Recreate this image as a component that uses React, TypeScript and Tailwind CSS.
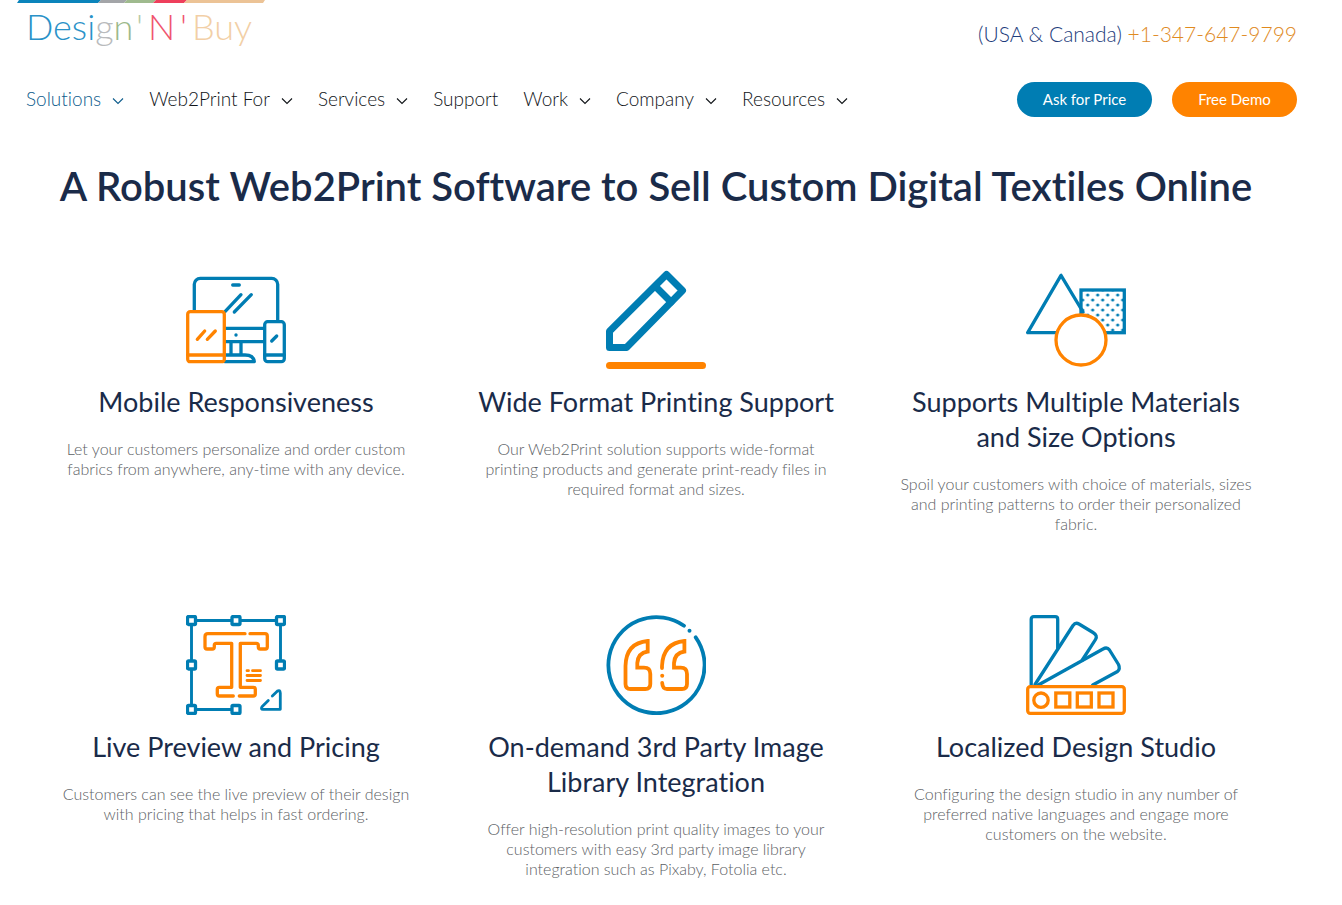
import { Fragment, type ReactNode } from "react";

const BLUE = "#007db3";
const ORANGE = "#ff8300";

function Logo() {
  return (
    <svg width="248" height="52" viewBox="0 0 248 52" role="img" aria-label="Design 'N' Buy">
      <path d="M2 0H84L81 3H0Z" fill="#0a84bb" />
      <path d="M84 0H110L107 3H81Z" fill="#a3a5a8" />
      <path d="M110 0H139L136 3H107Z" fill="#9fba8e" />
      <path d="M139 0H170L167 3H136Z" fill="#ee3f5c" />
      <path d="M170 0H248L246 3H167Z" fill="#ecc396" />
      <g fontFamily="Lato, sans-serif" fontSize="36" fontWeight="300">
        <text x="9" y="40" fill="#2a92c8">
          Desi<tspan fill="#b9bbbd">g</tspan>
          <tspan fill="#9cb98b">n</tspan>
        </text>
        <text x="119" y="40" fill="#b4caa8">'</text>
        <text x="131" y="40" fill="#f0556f">N</text>
        <text x="163" y="40" fill="#f0556f">'</text>
        <text x="175" y="40" fill="#f2cfa6">Buy</text>
      </g>
    </svg>
  );
}

function Chevron() {
  return (
    <svg width="12" height="8" viewBox="0 0 12 8" fill="none" stroke="currentColor" className="mt-1" aria-hidden="true">
      <path d="M1 1.5L6 6.5L11 1.5" strokeWidth="1.1" />
    </svg>
  );
}

function Icon({ children, width = 3.3 }: { children: ReactNode; width?: number }) {
  return (
    <svg
      width="100"
      height="100"
      viewBox="0 0 100 100"
      fill="none"
      stroke={BLUE}
      strokeWidth={width}
      strokeLinecap="round"
      strokeLinejoin="round"
      aria-hidden="true"
    >
      {children}
    </svg>
  );
}

function DevicesIcon() {
  return (
    <Icon>
      <path d="M8.3 41V14.3a6 6 0 0 1 6-6H85.7a6 6 0 0 1 6 6V51" />
      <path d="M39 58.3H78M39 71.7H78M46.7 15H53.3" />
      <path d="M39 41.7L55 24.7M48.3 42L65.3 24.7" />
      <path d="M45 72V85M55 72V85M39 85H59Q67.5 85 68.3 91.7H39" />
      <circle cx="50" cy="65" r="1.7" fill={BLUE} stroke="none" />
      <rect x="78.7" y="51.7" width="19.6" height="40" rx="3" fill="white" />
      <path d="M78.7 85H98.3M85.7 71L90.7 66" />
      <g stroke={ORANGE}>
        <rect x="1.7" y="41.7" width="36.6" height="50" rx="2.5" fill="white" />
        <path d="M1.7 85H38.3M11.3 69.3L18.7 61M21.3 69.3L29.3 61" />
      </g>
    </Icon>
  );
}

function PencilIcon() {
  return (
    <Icon width={7}>
      <path d="M3.5 77.5V61.3L60.5 4.5L76.5 20.5L20.5 77.5Z" />
      <path d="M49.5 16.5L65 32" />
      <path d="M3.5 95.5H96.5" stroke={ORANGE} />
    </Icon>
  );
}

function ShapesIcon() {
  return (
    <Icon>
      <defs>
        <pattern id="dots" x="56.7" y="20" width="10" height="10" patternUnits="userSpaceOnUse">
          <g fill={BLUE} stroke="none">
            <circle cx="5" cy="5" r="1.6" />
            <circle cx="0" cy="0" r="1.6" />
            <circle cx="10" cy="0" r="1.6" />
            <circle cx="0" cy="10" r="1.6" />
            <circle cx="10" cy="10" r="1.6" />
          </g>
        </pattern>
      </defs>
      <path d="M57 42L35 5.3L1.7 62.7H36" />
      <rect x="55" y="20" width="43.3" height="42.7" fill="url(#dots)" strokeLinejoin="miter" />
      <circle cx="55" cy="70" r="25" fill="white" stroke={ORANGE} />
    </Icon>
  );
}

const handles = [
  [5.5, 5.5],
  [50, 5.5],
  [94.5, 5.5],
  [5.5, 50],
  [94.5, 50],
  [5.5, 94.5],
  [50, 94.5],
];

function TypeIcon() {
  return (
    <Icon>
      <path d="M5.5 94.5V5.5H94.5V50M5.5 94.5H50" strokeWidth="2.9" />
      {handles.map(([x, y]) => (
        <rect key={`${x}-${y}`} x={x - 4} y={y - 4} width="8" height="8" rx="1" fill="white" />
      ))}
      <path d="M82.3 85.5L76 91.8Q74.5 94.3 77 94.3H94.3V78Q94 74.5 91.5 76L86.3 81" strokeWidth="2.8" />
      <g stroke={ORANGE} strokeWidth="3.3">
        <path d="M59 18.7H22Q19 18.7 19 21.7V32Q19 34 21 34H26.3Q28.3 34 28.3 32V30.3Q28.3 28.3 30.3 28.3H45.7V72.3H33.3Q31.3 72.3 31.3 74.3V79Q31.3 81 33.3 81H47.3" />
        <path d="M64 18.7H79Q81.3 18.7 81.3 21V32Q81.3 34 79.3 34H74.3Q72.3 34 72.3 32V30.3Q72.3 28.3 70.3 28.3H54.3V72.3H67.3Q69.3 72.3 69.3 74.3V79Q69.3 81 67.3 81H53.3" />
        <path d="M61 55.7H62.5M66.5 55.7H74.5M61 60.5H74.5M61 65.5H74.5" strokeWidth="2.8" />
      </g>
    </Icon>
  );
}

function QuoteIcon() {
  return (
    <Icon width={3.8}>
      <path d="M78 10.7A48.1 48.1 0 1 0 89.7 22.3" />
      <circle cx="83.5" cy="15.7" r="2" fill={BLUE} stroke="none" />
      <g stroke={ORANGE} strokeLinejoin="miter">
        <path d="M41.7 26V36.5Q32 38 31.3 48V52.7H38Q44.3 52.7 44.3 59V69Q44.3 74 39.3 74H24.5Q19.5 74 19.5 69V51Q20 28 41.7 26Z" />
        <path d="M56 53V51Q57 28 78.4 26V36.5Q68.7 38 68 48V52.7H74.7Q81 52.7 81 59V69Q81 74 76 74H61Q56.5 74 56.2 68" />
      </g>
      <circle cx="56.2" cy="60.7" r="2" fill={ORANGE} stroke="none" />
    </Icon>
  );
}

function SwatchIcon() {
  return (
    <Icon>
      <path d="M5.2 70V4.2Q5.2 1.7 7.7 1.7H29.2Q31.7 1.7 31.7 4.2V33" />
      <path d="M9 69.5L47 10.5Q49.5 7 53 9L67 17.5Q72 20.5 69.5 24.5L56.3 45" />
      <path d="M12.3 70L77 34Q81 31.5 83.5 35L92.5 49.5Q94.5 54 91.5 56.5L66.7 70" />
      <g stroke={ORANGE}>
        <rect x="1.7" y="71.7" width="96.6" height="26.6" rx="2.5" fill="white" />
        <circle cx="15" cy="85.2" r="7.2" />
        <g strokeLinejoin="miter">
          <rect x="29.8" y="78" width="14" height="14" />
          <rect x="51.3" y="78" width="14" height="14" />
          <rect x="73" y="78" width="14" height="14" />
        </g>
      </g>
    </Icon>
  );
}

const menu = [
  { label: "Solutions", drop: true, active: true },
  { label: "Web2Print For", drop: true },
  { label: "Services", drop: true },
  { label: "Support" },
  { label: "Work", drop: true },
  { label: "Company", drop: true },
  { label: "Resources", drop: true },
];

const features = [
  {
    icon: <DevicesIcon />,
    title: ["Mobile Responsiveness"],
    text: ["Let your customers personalize and order custom", "fabrics from anywhere, any-time with any device."],
  },
  {
    icon: <PencilIcon />,
    title: ["Wide Format Printing Support"],
    text: [
      "Our Web2Print solution supports wide-format",
      "printing products and generate print-ready files in",
      "required format and sizes.",
    ],
  },
  {
    icon: <ShapesIcon />,
    title: ["Supports Multiple Materials", "and Size Options"],
    text: [
      "Spoil your customers with choice of materials, sizes",
      "and printing patterns to order their personalized",
      "fabric.",
    ],
  },
  {
    icon: <TypeIcon />,
    title: ["Live Preview and Pricing"],
    text: ["Customers can see the live preview of their design", "with pricing that helps in fast ordering."],
  },
  {
    icon: <QuoteIcon />,
    title: ["On-demand 3rd Party Image", "Library Integration"],
    text: [
      "Offer high-resolution print quality images to your",
      "customers with easy 3rd party image library",
      "integration such as Pixaby, Fotolia etc.",
    ],
  },
  {
    icon: <SwatchIcon />,
    title: ["Localized Design Studio"],
    text: [
      "Configuring the design studio in any number of",
      "preferred native languages and engage more",
      "customers on the website.",
    ],
  },
];

function Lines({ lines }: { lines: string[] }) {
  return (
    <>
      {lines.map((line, i) => (
        <Fragment key={line}>
          {i > 0 && <br />}
          {line}
        </Fragment>
      ))}
    </>
  );
}

export default function App() {
  return (
    <div className="bg-white font-['Lato',sans-serif] [font-variant-ligatures:none]">
      <header className="pr-[45px]">
        <div className="flex items-start justify-between pl-[17px]">
          <a href="#">
            <Logo />
          </a>
          <p className="pt-5 text-[21px] leading-7 font-light text-[#1d3c7c]">
            (USA &amp; Canada){" "}
            <a href="tel:+13476479799" className="text-[#e08a1e]">
              +1-347-647-9799
            </a>
          </p>
        </div>
        <div className="flex items-center justify-between pt-[30px] pl-[26px]">
          <nav className="flex gap-[25px] pb-[2px] text-[19px] leading-6 font-light text-[#101418]">
            {menu.map((item) => (
              <a
                key={item.label}
                href="#"
                className={item.active ? "flex items-center gap-[11px] text-[#0d5c8c]" : "flex items-center gap-[11px]"}
              >
                {item.label}
                {item.drop && <Chevron />}
              </a>
            ))}
          </nav>
          <div className="flex gap-5 text-[15px] text-white">
            <button type="button" className="h-[35px] w-[135px] rounded-full bg-[#007db3]">
              Ask for Price
            </button>
            <button type="button" className="h-[35px] w-[125px] rounded-full bg-[#ff8300]">
              Free Demo
            </button>
          </div>
        </div>
      </header>

      <main className="pt-11 pr-[56px] pb-9 pl-[26px] text-center">
        <h1 className="text-[40px] leading-[50px] font-semibold text-[#1a2b49]">
          A Robust Web2Print Software to Sell Custom Digital Textiles Online
        </h1>
        <div className="grid grid-cols-3 gap-y-20 pt-[59px]">
          {features.map((item) => (
            <section key={item.title[0]} className="flex flex-col items-center">
              {item.icon}
              <h2 className="pt-[14px] text-[27px] leading-[35px] text-[#1a2b49]">
                <Lines lines={item.title} />
              </h2>
              <p className="pt-5 pb-px text-base leading-5 font-light text-[#5c6165]">
                <Lines lines={item.text} />
              </p>
            </section>
          ))}
        </div>
      </main>
    </div>
  );
}
